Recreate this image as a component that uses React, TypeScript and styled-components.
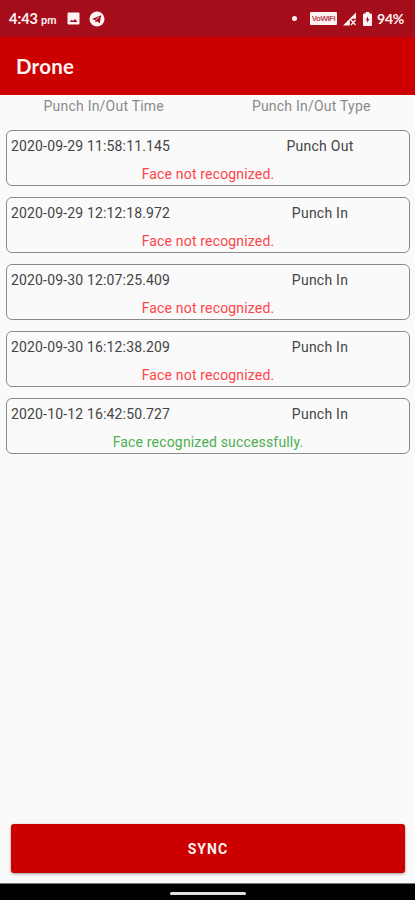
import React from 'react';
import styled, { createGlobalStyle } from 'styled-components';

const GlobalStyle = createGlobalStyle`
  * { box-sizing: border-box; }
  body { margin: 0; background: #fafafa; font-family: Roboto, sans-serif; }
`;

const Screen = styled.div`
  display: flex;
  flex-direction: column;
  width: 415px;
  height: 900px;
  background: #fafafa;
  overflow: hidden;
`;

const StatusBar = styled.header`
  display: flex;
  align-items: center;
  height: 37px;
  padding: 0 10px 0 9px;
  background: #a50d1b;
  color: #fff3f3;
  font-family: Lato, sans-serif;
  font-weight: 700;
  svg { display: block; flex: none; }
`;

const Clock = styled.span`
  width: 58px;
  font-size: 14.5px;
  line-height: 18px;
  white-space: nowrap;
  padding-top: 2px;
`;

const Meridiem = styled.span`
  margin-left: 3px;
  font-size: 11px;
`;

const Notifications = styled.div`
  display: flex;
  align-items: center;
  gap: 9px;
  flex: 1;
`;

const Indicators = styled.div`
  display: flex;
  align-items: center;
`;

const Dot = styled.i`
  width: 5px;
  height: 5px;
  margin-right: 13px;
  border-radius: 50%;
  background: #fff3f3;
`;

const VoWifi = styled.span`
  width: 27px;
  height: 13px;
  margin-right: 6px;
  border-radius: 1px;
  background: #fff3f3;
  color: #b94a54;
  font: 700 8px/13px 'Liberation Sans', sans-serif;
  letter-spacing: -0.5px;
  text-align: center;
`;

const BatterySlot = styled.span`
  margin-left: 6px;
`;

const BatteryLevel = styled.span`
  width: 28px;
  margin-left: 5px;
  font-size: 14px;
  line-height: 18px;
  letter-spacing: -0.2px;
`;

const AppBar = styled.div`
  display: flex;
  align-items: center;
  height: 58px;
  padding-left: 16px;
  background: #cc0000;
`;

const Title = styled.h1`
  margin: 0;
  color: #fff5f5;
  font: 700 20.5px/24px Lato, sans-serif;
  letter-spacing: 0.2px;
`;

const Columns = styled.div`
  display: grid;
  grid-template-columns: 1fr 1fr;
  height: 35px;
  padding-top: 2px;
  color: #8a8a8a;
  font-size: 14px;
  line-height: 18px;
  letter-spacing: 0.22px;
  text-align: center;
`;

const Records = styled.main`
  display: flex;
  flex-direction: column;
  flex: 1;
  gap: 11px;
  padding: 0 5px 0 6px;
`;

const Card = styled.article`
  height: 56px;
  border: 1px solid #8a8a8a;
  border-radius: 6px;
`;

const CardRow = styled.div`
  display: grid;
  grid-template-columns: 220px 1fr;
  padding: 6px 0 0 4px;
  color: #444;
  font-size: 14px;
  line-height: 18px;
`;

const Timestamp = styled.time`
  letter-spacing: 0.16px;
  white-space: nowrap;
`;

const PunchType = styled.span`
  letter-spacing: 0.25px;
  text-align: center;
`;

const Result = styled.p<{ $success: boolean }>`
  margin: 10px 0 0;
  color: ${({ $success }) => ($success ? '#4caf50' : '#ff444a')};
  font-size: 14px;
  line-height: 18px;
  letter-spacing: 0.17px;
  text-align: center;
`;

const SyncButton = styled.button`
  flex: none;
  height: 49px;
  margin: 0 10px 10px 11px;
  padding: 1px 0 0;
  border: 0;
  border-radius: 3px;
  background: #cc0000;
  box-shadow: 0 1px 3px rgba(0, 0, 0, 0.4);
  color: #fff0f0;
  font: 700 14px/18px Roboto, sans-serif;
  letter-spacing: 1.1px;
`;

const GestureBar = styled.footer`
  display: flex;
  justify-content: center;
  align-items: center;
  height: 17px;
  border-top: 1px solid #777;
  background: #000;
`;

const GestureHandle = styled.i`
  width: 76px;
  height: 3px;
  margin-top: 2px;
  border-radius: 2px;
  background: #e0e0dc;
`;

const records = [
  { time: '2020-09-29 11:58:11.145', type: 'Punch Out', success: false },
  { time: '2020-09-29 12:12:18.972', type: 'Punch In', success: false },
  { time: '2020-09-30 12:07:25.409', type: 'Punch In', success: false },
  { time: '2020-09-30 16:12:38.209', type: 'Punch In', success: false },
  { time: '2020-10-12 16:42:50.727', type: 'Punch In', success: true },
];

const GalleryIcon = () => (
  <svg width="13" height="13" viewBox="0 0 13 13">
    <rect x="0.5" y="0.5" width="12" height="12" rx="1" fill="#fff3f3" />
    <path d="M2.7 10 4.7 7.8 6 9.1 8 7 10.5 10Z" fill="#a50d1b" />
  </svg>
);

const TelegramIcon = () => (
  <svg width="16" height="16" viewBox="0 0 16 16">
    <circle cx="8" cy="8" r="7.5" fill="#fff3f3" />
    <path d="m3 8 9.2-3.8-1.5 8L8 10.2l-1.4 1.4-.4-2.3Z" fill="#a50d1b" />
    <path d="m6.4 9.1 3.8-3" stroke="#fff3f3" strokeWidth="0.8" />
  </svg>
);

const SignalIcon = () => (
  <svg width="14" height="14" viewBox="0 0 14 14">
    <path d="M0 13.5 13 .5v6.3H9.2L6.8 9v4.5Z" fill="#fff3f3" />
    <path d="m8 8 4.5 5m0-5L8 13" stroke="#fff3f3" strokeWidth="1.3" />
  </svg>
);

const BatteryIcon = () => (
  <svg width="9" height="14" viewBox="0 0 9 14">
    <path d="M2.7 0h3.6v1.5H8q1 0 1 1V13q0 1-1 1H1q-1 0-1-1V2.5q0-1 1-1h1.7Z" fill="#fff3f3" />
    <path d="M5 4.2 2.8 8.2h1.4v2.9l2.1-4H5Z" fill="#a50d1b" />
  </svg>
);

export default function App() {
  return (
    <Screen>
      <GlobalStyle />
      <StatusBar>
        <Clock>4:43<Meridiem>pm</Meridiem></Clock>
        <Notifications><GalleryIcon /><TelegramIcon /></Notifications>
        <Indicators>
          <Dot />
          <VoWifi>VoWiFi</VoWifi>
          <SignalIcon />
          <BatterySlot><BatteryIcon /></BatterySlot>
          <BatteryLevel>94%</BatteryLevel>
        </Indicators>
      </StatusBar>
      <AppBar><Title>Drone</Title></AppBar>
      <Columns><span>Punch In/Out Time</span><span>Punch In/Out Type</span></Columns>
      <Records>
        {records.map(({ time, type, success }) => (
          <Card key={time}>
            <CardRow><Timestamp>{time}</Timestamp><PunchType>{type}</PunchType></CardRow>
            <Result $success={success}>
              {success ? 'Face recognized successfully.' : 'Face not recognized.'}
            </Result>
          </Card>
        ))}
      </Records>
      <SyncButton>SYNC</SyncButton>
      <GestureBar><GestureHandle /></GestureBar>
    </Screen>
  );
}
